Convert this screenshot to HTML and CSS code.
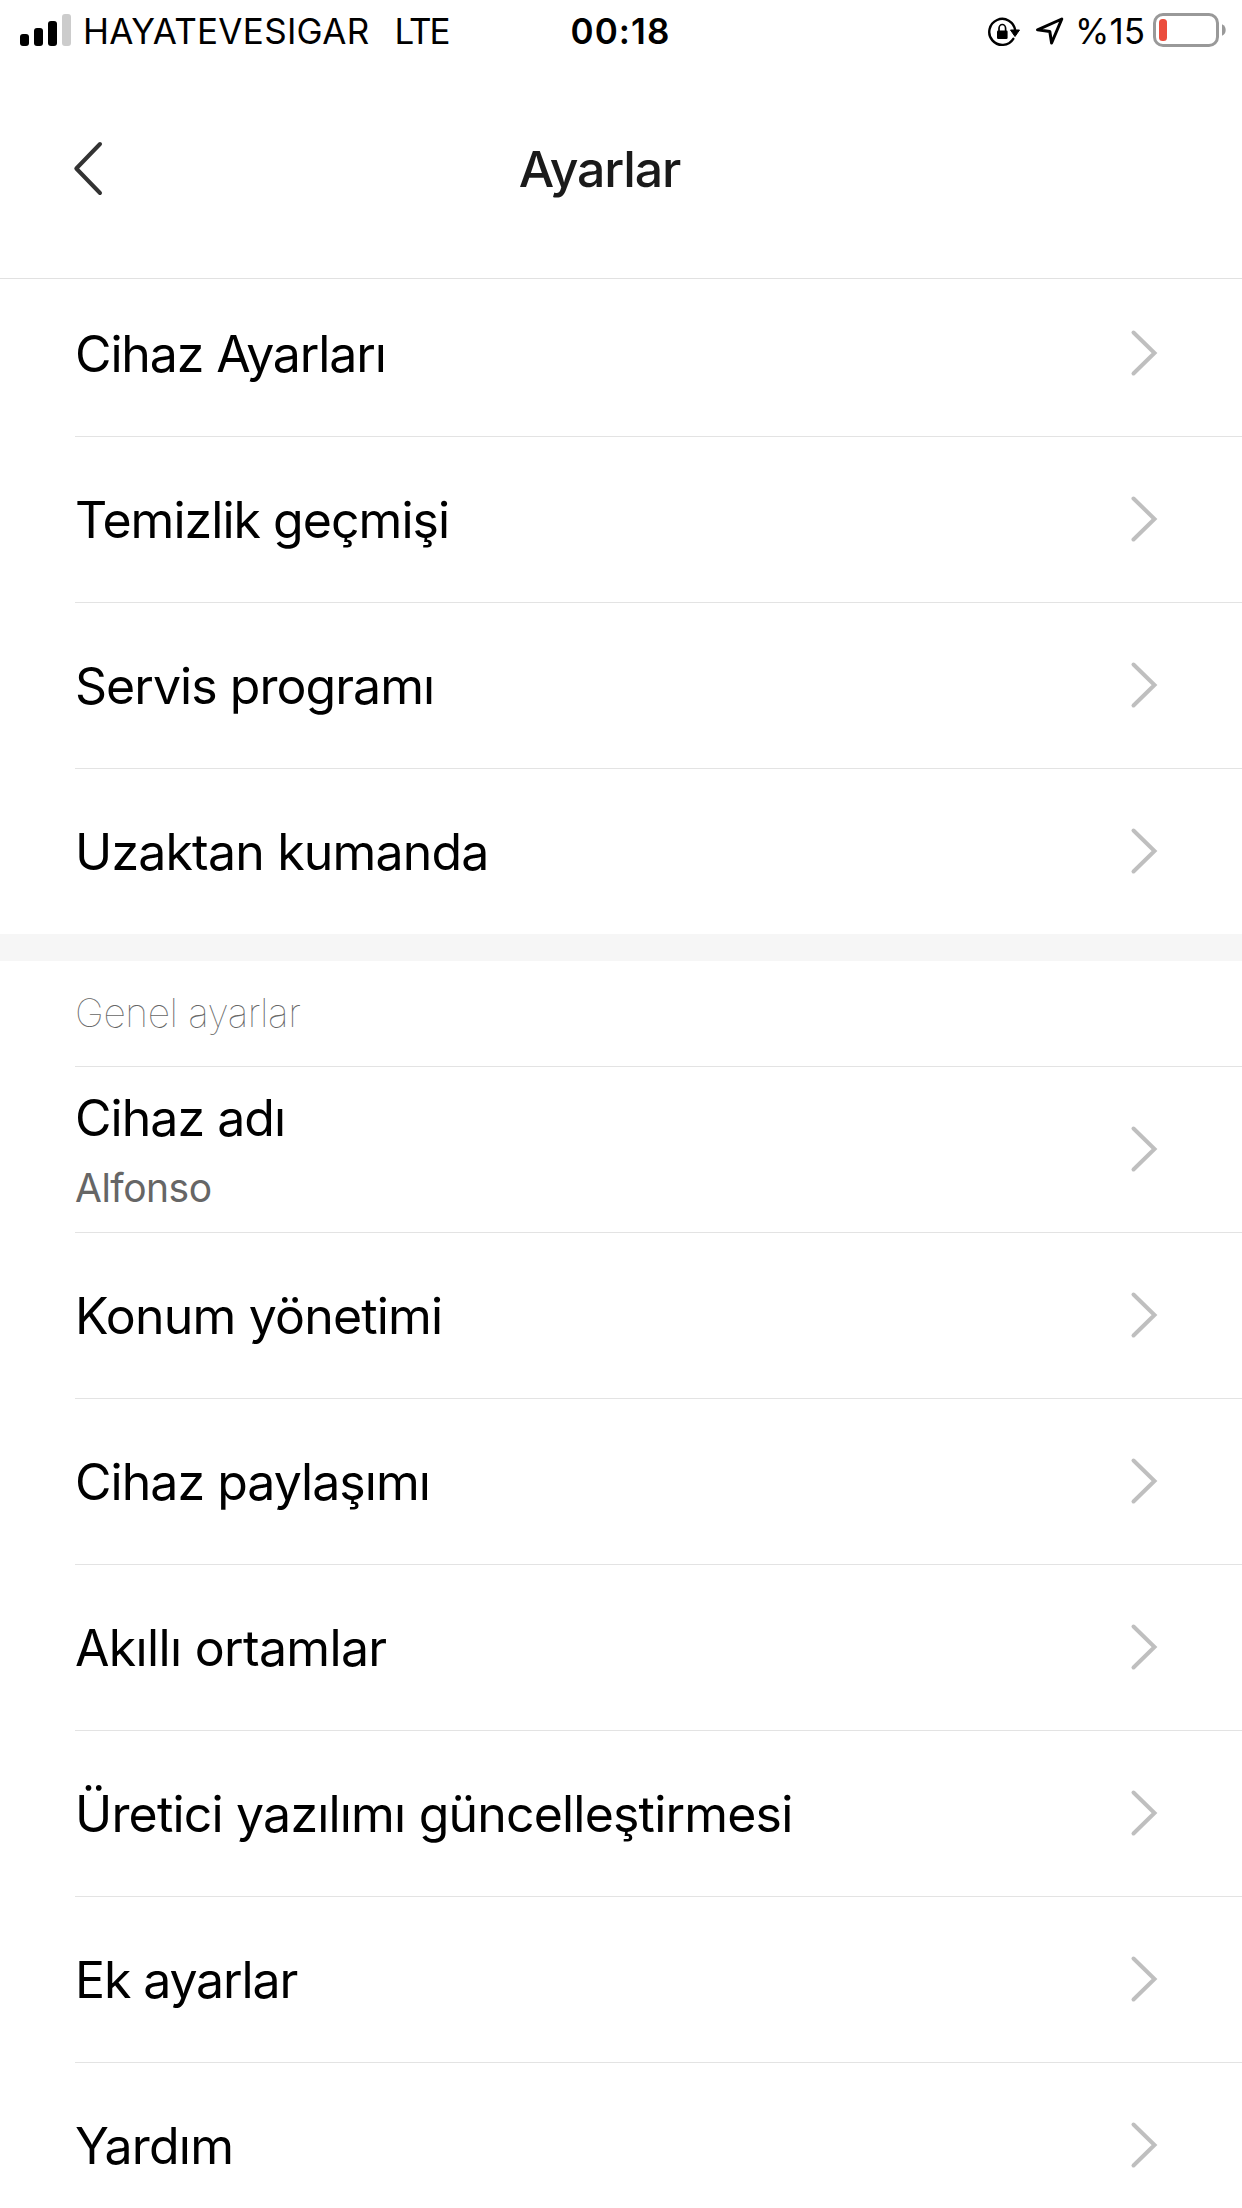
FILE: index.html
```
<!DOCTYPE html>
<html lang="tr">
<head>
<meta charset="utf-8">
<title>Ayarlar</title>
<link rel="stylesheet" href="styles.css">
</head>
<body>
<svg class="defs" aria-hidden="true">
  <symbol id="chevron" viewBox="0 0 28 48"><path d="M3.5 3.5 24.5 24 3.5 44.5" fill="none" stroke="#bfbfbf" stroke-width="4" stroke-linecap="round"/></symbol>
</svg>
<div class="status">
  <div class="status-left">
    <svg class="signal" width="51" height="32" viewBox="0 0 51 32">
      <rect x="0" y="20" width="9" height="12" rx="3"/>
      <rect x="14" y="14" width="9" height="18" rx="3"/>
      <rect x="28" y="7" width="9" height="25" rx="3"/>
      <rect x="42" y="0" width="9" height="32" rx="3" fill="#ccc"/>
    </svg>
    <span class="carrier">HAYATEVESIGAR</span>
    <span class="network">LTE</span>
  </div>
  <div class="clock">00:18</div>
  <div class="status-right">
    <svg class="lock" width="34" height="32" viewBox="0 0 34 32">
      <path d="M26.3 22.8A13 13 0 1 1 28.2 14.5" fill="none" stroke="#000" stroke-width="2.4" stroke-linecap="round"/>
      <path d="M23.5 14h9L28 20.5z" stroke="#000" stroke-width="1" stroke-linejoin="round"/>
      <rect x="10" y="14.6" width="10.6" height="8.4" rx="1.2"/>
      <path d="M12 15.5v-3a3.3 4 0 0 1 6.6 0v3" fill="none" stroke="#000" stroke-width="1.7"/>
    </svg>
    <svg class="location" width="30" height="30" viewBox="0 0 30 30">
      <path d="M2.5 13.8 26.8 3 16.6 27 14.8 15.4z" fill="none" stroke="#000" stroke-width="3" stroke-linejoin="round"/>
    </svg>
    <span class="percent">%15</span>
    <svg class="battery" width="74" height="34" viewBox="0 0 74 34">
      <rect x="1.5" y="1.5" width="63" height="31" rx="8.5" fill="none" stroke="#999" stroke-width="3"/>
      <rect x="6" y="6" width="8" height="22" rx="3.5" fill="#eb4d3d"/>
      <path d="M69 11.2a6.4 6.4 0 0 1 0 11.6z" fill="#999"/>
    </svg>
  </div>
</div>
<header class="header">
  <svg class="back" width="36" height="58" viewBox="0 0 36 58"><path d="M32 5 8.3 29.5 32 54" fill="none" stroke="#333" stroke-width="4" stroke-linecap="round" stroke-linejoin="round"/></svg>
  <h1 class="title">Ayarlar</h1>
</header>
<main>
  <section class="group">
    <div class="row first"><span class="label tight">Cihaz Ayarları</span><svg class="chevron"><use href="#chevron"/></svg></div>
    <div class="row"><span class="label">Temizlik geçmişi</span><svg class="chevron"><use href="#chevron"/></svg></div>
    <div class="row"><span class="label">Servis programı</span><svg class="chevron"><use href="#chevron"/></svg></div>
    <div class="row last"><span class="label loose">Uzaktan kumanda</span><svg class="chevron"><use href="#chevron"/></svg></div>
  </section>
  <div class="separator"></div>
  <section class="group">
    <h2 class="section-title">Genel ayarlar</h2>
    <div class="row"><div class="stack"><span class="label">Cihaz adı</span><span class="value">Alfonso</span></div><svg class="chevron"><use href="#chevron"/></svg></div>
    <div class="row"><span class="label loose">Konum yönetimi</span><svg class="chevron"><use href="#chevron"/></svg></div>
    <div class="row"><span class="label">Cihaz paylaşımı</span><svg class="chevron"><use href="#chevron"/></svg></div>
    <div class="row"><span class="label looser">Akıllı ortamlar</span><svg class="chevron"><use href="#chevron"/></svg></div>
    <div class="row"><span class="label loose">Üretici yazılımı güncelleştirmesi</span><svg class="chevron"><use href="#chevron"/></svg></div>
    <div class="row"><span class="label tight">Ek ayarlar</span><svg class="chevron"><use href="#chevron"/></svg></div>
    <div class="row last"><span class="label loose">Yardım</span><svg class="chevron"><use href="#chevron"/></svg></div>
  </section>
</main>
</body>
</html>
```
FILE: styles.css
```
* { box-sizing: border-box; }
html { height: 2208px; overflow: hidden; }
body {
  margin: 0;
  width: 1242px;
  height: 2208px;
  overflow: hidden;
  background: #fff;
  color: #000;
  font-family: Inter, "Liberation Sans", sans-serif;
}
svg { display: block; flex: none; }
.defs { display: none; }

.status {
  display: grid;
  grid-template-columns: 550px 101px 1fr;
  height: 60px;
  padding: 10px 15px 0 20px;
  font-size: 35px;
  line-height: 42px;
  white-space: nowrap;
}
.status-left, .status-right { display: flex; align-items: flex-start; }
.status-right { justify-content: flex-end; }
.signal { margin-top: 4px; }
.carrier { margin-left: 12px; letter-spacing: .3px; }
.network { margin-left: 25px; letter-spacing: -2px; }
.clock { font-weight: 600; letter-spacing: 1.1px; text-align: center; }
.lock { margin: 6px 14px 0 0; }
.location { margin: 6px 10px 0 0; }
.percent { margin-right: 8px; }
.battery { margin-top: 3px; }

.header {
  display: flex;
  height: 219px;
  padding: 79px 147px 0 68px;
  border-bottom: 1px solid #e1e1e1;
}
.title {
  flex: 1;
  margin: 0;
  color: #1a1a1a;
  font-size: 50px;
  font-weight: 500;
  line-height: 60px;
  letter-spacing: -1.1px;
  text-align: center;
}

.row {
  display: flex;
  align-items: center;
  justify-content: space-between;
  height: 166px;
  margin-left: 75px;
  padding-right: 84px;
  border-bottom: 1px solid #e3e3e3;
}
.row.first { height: 158px; padding-bottom: 8px; }
.row.last { border-bottom-color: transparent; }
.label {
  font-size: 50px;
  line-height: 60px;
  letter-spacing: -.96px;
  white-space: nowrap;
}
.label.tight { letter-spacing: -1.13px; }
.label.loose { letter-spacing: -.81px; }
.label.looser { letter-spacing: -.67px; }
.stack { display: flex; flex-direction: column; gap: 16px; }
.value {
  color: #666;
  font-size: 39px;
  line-height: 48px;
  letter-spacing: -.5px;
}
.chevron { width: 28px; height: 48px; margin-bottom: 1px; }
.separator { height: 27px; margin-top: -1px; background: #f6f6f6; }
.section-title {
  display: flex;
  align-items: center;
  height: 106px;
  margin: 0 0 0 75px;
  padding-bottom: 1px;
  border-bottom: 1px solid #e3e3e3;
  color: #666;
  font-size: 39px;
  font-weight: 100;
  line-height: 48px;
  letter-spacing: -.4px;
}
```
